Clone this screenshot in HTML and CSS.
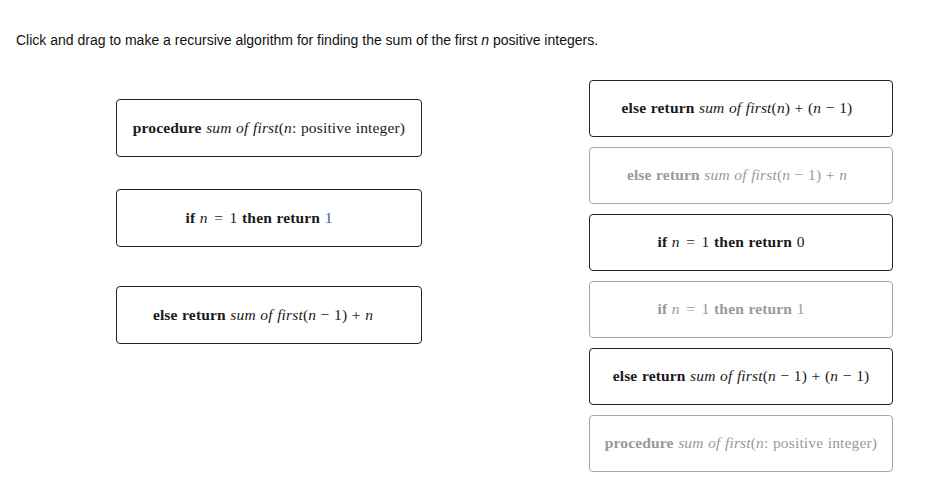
FILE: index.html
```html
<!DOCTYPE html>
<html>
<head>
<meta charset="utf-8">
<link rel="stylesheet" href="styles.css">
</head>
<body>
<p class="prompt">Click and drag to make a recursive algorithm for finding the sum of the first <i>n</i> positive integers.</p>
<div class="board">
  <div class="col left">
    <div class="tile"><span><b>procedure</b> <i>sum of first</i>(<i>n</i>: positive integer)</span></div>
    <div class="tile cond"><span><b>if</b> <i>n</i> <span class="eq">=</span> 1 <b>then return</b> <span class="num">1</span></span></div>
    <div class="tile third else"><span><b>else return</b> <i>sum of first</i>(<i>n</i> − 1) + <i>n</i></span></div>
  </div>
  <div class="col right">
    <div class="tile else-s"><span><b>else return</b> <i>sum of first</i>(<i>n</i>) + (<i>n</i> − 1)</span></div>
    <div class="tile faded else-s"><span><b>else return</b> <i>sum of first</i>(<i>n</i> − 1) + <i>n</i></span></div>
    <div class="tile cond"><span><b>if</b> <i>n</i> <span class="eq">=</span> 1 <b>then return</b> 0</span></div>
    <div class="tile faded cond"><span><b>if</b> <i>n</i> <span class="eq">=</span> 1 <b>then return</b> 1</span></div>
    <div class="tile"><span><b>else return</b> <i>sum of first</i>(<i>n</i> − 1) + (<i>n</i> − 1)</span></div>
    <div class="tile faded"><span><b>procedure</b> <i>sum of first</i>(<i>n</i>: positive integer)</span></div>
  </div>
</div>
</body>
</html>
```
FILE: styles.css
```css
html, body {
  margin: 0;
  padding: 0;
  background: #ffffff;
}
body {
  width: 929px;
  height: 493px;
  overflow: hidden;
}
.prompt {
  margin: 32px 0 0 16px;
  font-family: "Liberation Sans", Arial, sans-serif;
  font-size: 14px;
  line-height: 16px;
  color: #111;
}
.board {
  display: flex;
  align-items: flex-start;
  margin-top: 32px;
  padding-left: 116px;
}
.col {
  display: flex;
  flex-direction: column;
}
.left {
  width: 306px;
  gap: 32px;
  margin-top: 19px;
}
.left .third {
  margin-top: 7px;
}
.right {
  width: 304px;
  gap: 10px;
  margin-left: 167px;
}
.tile {
  box-sizing: border-box;
  height: 58px;
  border: 1px solid #222;
  border-radius: 4px;
  display: flex;
  align-items: center;
  justify-content: center;
  font-family: "Liberation Serif", "Times New Roman", serif;
  font-size: 15.5px;
  letter-spacing: 0.15px;
  word-spacing: 0.5px;
  color: #1a1a1a;
  white-space: nowrap;
  padding-bottom: 1px;
}
.tile.cond {
  padding-right: 20px;
}
.tile.else {
  padding-right: 12px;
}
.tile.else-s {
  padding-right: 8px;
}
.right .tile {
  height: 57px;
}
.tile b {
  font-weight: bold;
}
.eq {
  margin: 0 2px;
}
.num {
  color: #3d5f86;
}
.tile.faded {
  border-color: #a8a8a8;
  color: #9a9a9a;
}
```
